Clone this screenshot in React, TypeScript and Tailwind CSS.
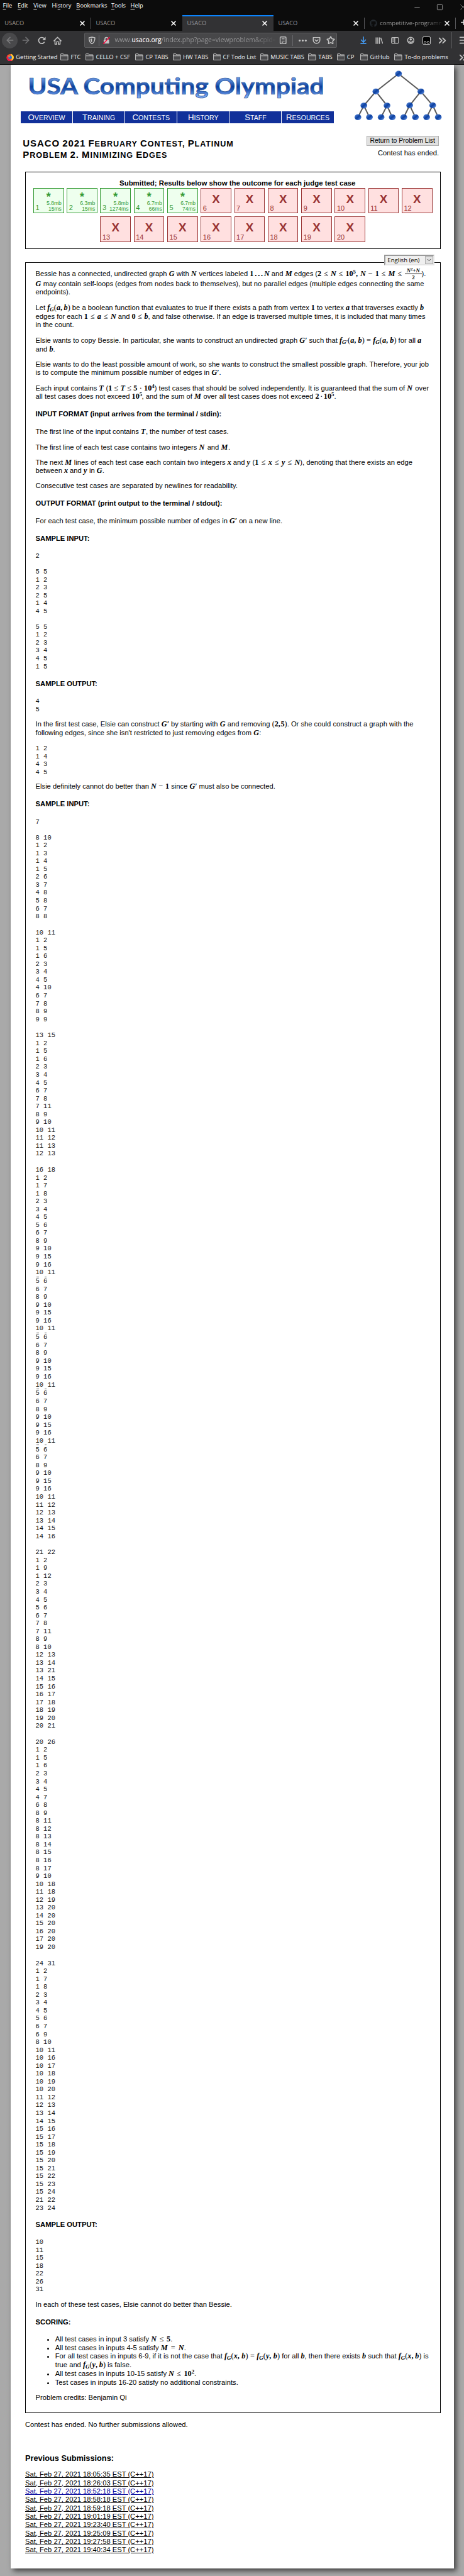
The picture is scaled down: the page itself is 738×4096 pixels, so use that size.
import React from "react";
import {
  ArrowDownToLine,
  ArrowLeft,
  ArrowRight,
  ChevronDown,
  ChevronsRight,
  Menu,
  Minus,
  Plus,
  Square,
  Star,
  X,
} from "lucide-react";
import { FaGithub } from "react-icons/fa";

/* ---------- browser chrome ---------- */

const menus = [
  ["", "F", "ile", "w-[23.5px]"],
  ["", "E", "dit", "w-[25.2px]"],
  ["", "V", "iew", "w-[29.2px]"],
  ["Hi", "s", "tory", "w-[38.9px]"],
  ["", "B", "ookmarks", "w-[55.6px]"],
  ["", "T", "ools", "w-[30.6px]"],
  ["", "H", "elp", "w-[30px]"],
];

function MenuBar() {
  return (
    <div className="flex h-[23.5px] justify-between">
      <div className="flex pl-[4.6px] pt-[2px] text-[9.3px] leading-[13px] text-white">
        {menus.map(([a, b, c, w]) => (
          <div key={b + c} className={`whitespace-nowrap ${w}`}>
            {a}
            <span className="underline underline-offset-[1.5px]">{b}</span>
            {c}
          </div>
        ))}
      </div>
      <div className="flex items-center text-[#9a9a9a]">
        <Minus size={13} strokeWidth={1.6} className="mr-[24px]" />
        <Square size={11} strokeWidth={2} className="mr-[24px]" />
        <X size={15} strokeWidth={1.3} className="-mr-[6px]" />
      </div>
    </div>
  );
}

function Tab({ active, line }: { active?: boolean; line?: boolean }) {
  return (
    <div
      className={
        active
          ? "flex w-[145px] shrink-0 items-center border-t-2 border-[#0a84ff] bg-[#323234]"
          : "flex w-[145.1px] shrink-0 items-center border-t-2 border-transparent"
      }
    >
      <span className="grow pl-[7.3px] text-[9.3px] text-[#9b9b9b]">USACO</span>
      <X size={12} strokeWidth={3.2} className="mr-[7px] text-white" />
      <span className={line ? "h-[18.5px] w-px bg-[#56565a]" : "w-px"} />
    </div>
  );
}

function TabStrip() {
  return (
    <div className="flex h-[25px] overflow-hidden">
      <Tab line />
      <Tab />
      <Tab active />
      <Tab line />
      <div className="flex w-[145px] shrink-0 items-center pt-[2px]">
        <FaGithub size={12} className="ml-[7.5px] shrink-0 text-[#24292e]" />
        <span className="ml-[4.5px] w-[98px] overflow-hidden whitespace-nowrap bg-gradient-to-r from-[#9b9b9b] from-75% to-[#2a2a2a] bg-clip-text text-[9.5px] text-transparent">
          competitive-programm
        </span>
        <X size={12} strokeWidth={3.2} className="ml-[3.5px] mr-[7px] shrink-0 text-white" />
        <span className="h-[18.5px] w-px shrink-0 bg-[#56565a]" />
      </div>
      <Plus size={13} strokeWidth={2.6} className="ml-[6px] mt-[5px] shrink-0 text-[#e0e0e0]" />
    </div>
  );
}

function Toolbar() {
  return (
    <div className="flex h-[31px] items-center overflow-hidden text-[#c4c4c4]">
      <span className="ml-[3.2px] flex h-[25px] w-[25px] shrink-0 items-center justify-center rounded-full bg-[#49494b] text-[#7c7c7e]">
        <ArrowLeft size={16} strokeWidth={2.4} />
      </span>
      <ArrowRight size={16} strokeWidth={2.4} className="ml-[5.3px] shrink-0 text-[#737375]" />
      <svg viewBox="0 0 16 16" className="ml-[11px] h-[13px] w-[13px] shrink-0" fill="none" stroke="currentColor" strokeWidth="2">
        <path d="M13.2 10.6A6 6 0 1 1 12.6 4.2" />
        <path d="M15.4 0.5V7H9z" fill="currentColor" stroke="none" />
      </svg>
      <svg viewBox="0 0 16 16" className="ml-[11.5px] h-[13px] w-[13px] shrink-0" fill="none" stroke="currentColor" strokeWidth="1.8">
        <path d="M1 8.5 8 1.5l7 7M3 7v8h3.5v-5h3v5H13V7" strokeLinecap="round" strokeLinejoin="round" />
      </svg>
      <div className="ml-[36px] flex h-[24px] w-[402px] shrink-0 items-center overflow-hidden rounded-[2px] border border-[#5c5c5e] bg-[#474749]">
        <svg viewBox="0 0 16 16" className="ml-[5px] h-[12.5px] w-[12.5px] shrink-0" fill="none" stroke="currentColor" strokeWidth="1.8">
          <path d="M8 1.2 14 2.4c0 6-1 9.8-6 12.6C3 12.2 2 8.400 2 2.400z" strokeLinejoin="round" />
          <path d="M8 4.200v8c-2-1.600-2.900-4-3-7.400z" fill="currentColor" stroke="none" />
        </svg>
        <span className="ml-[4.5px] h-[17px] w-px shrink-0 bg-[#6a6a72]" />
        <svg viewBox="0 0 16 16" className="ml-[5px] h-[12.5px] w-[12.5px] shrink-0">
          <rect x="2.5" y="7" width="11" height="7.5" rx="1" fill="#c4c4c4" />
          <path d="M5 8V5a3 3 0 0 1 6 0v3" fill="none" stroke="#c4c4c4" strokeWidth="2" />
          <path d="M1.5 15 14.5 1.2" stroke="#ff0039" strokeWidth="1.8" />
        </svg>
        <span className="ml-[7px] w-[255.5px] shrink-0 overflow-hidden whitespace-nowrap bg-gradient-to-r from-[#98989a] from-85% to-[#505052] bg-clip-text text-[10.4px] text-transparent">
          www.<span className="text-white">usaco.org</span>/index.php?page=viewproblem&amp;cpid=
        </span>
        <svg viewBox="0 0 16 16" className="ml-[6px] h-[12.5px] w-[12.5px] shrink-0" fill="none" stroke="currentColor" strokeWidth="1.8">
          <rect x="2" y="1" width="12" height="14" rx="1.5" />
          <path d="M5 4.500h6M5 7h6M5 9.500h6M5 12h3" strokeWidth="1.1" />
        </svg>
        <span className="ml-[9px] h-[17px] w-px shrink-0 bg-[#66666a]" />
        <svg viewBox="0 0 16 16" className="ml-[9px] h-[13px] w-[13px] shrink-0" fill="currentColor">
          <circle cx="2" cy="8" r="1.9" />
          <circle cx="8" cy="8" r="1.9" />
          <circle cx="14" cy="8" r="1.9" />
        </svg>
        <svg viewBox="0 0 16 16" className="ml-[9px] h-[13px] w-[13px] shrink-0" fill="none" stroke="currentColor" strokeWidth="1.8" strokeLinecap="round" strokeLinejoin="round">
          <path d="M1.500 2h13v5a6.500 6.500 0 0 1-13 0z" />
          <path d="M5 6.500 8 9.300l3-2.800" />
        </svg>
        <Star size={14} strokeWidth={2.6} className="ml-[8.5px] shrink-0" />
      </div>
      <ArrowDownToLine size={14} strokeWidth={2.6} className="ml-[35px] shrink-0 text-[#45a1ff]" />
      <svg viewBox="0 0 16 16" className="ml-[12px] h-[12.5px] w-[12.5px] shrink-0" fill="none" stroke="currentColor" strokeWidth="1.8">
        <path d="M1.500 2v13M5 2v13M8.500 2v13M11 2.500 15 14.500" />
      </svg>
      <svg viewBox="0 0 16 16" className="ml-[12.5px] h-[12.5px] w-[12.5px] shrink-0" fill="none" stroke="currentColor" strokeWidth="1.6">
        <rect x="1" y="2" width="14" height="12" rx="1.8" />
        <path d="M7.500 2v12M3 5h2.500M3 7.500h2.500M3 10h2.500" />
      </svg>
      <svg viewBox="0 0 16 16" className="ml-[12.5px] h-[12.5px] w-[12.5px] shrink-0" fill="none" stroke="currentColor" strokeWidth="1.8">
        <circle cx="8" cy="8" r="6.4" />
        <circle cx="8" cy="6" r="2.3" fill="currentColor" stroke="none" />
        <path d="M4 8.500c.5 4.500 7.500 4.500 8 0" />
      </svg>
      <svg viewBox="0 0 16 16" className="ml-[12.5px] h-[13px] w-[13px] shrink-0" fill="#000" stroke="#fff" strokeWidth="1">
        <rect x=".5" y=".5" width="15" height="15" rx="2.5" />
        <circle cx="5" cy="11.5" r="2" />
        <circle cx="11" cy="11.5" r="2" />
      </svg>
      <ChevronsRight size={19} strokeWidth={2.3} className="ml-[9px] shrink-0" />
      <span className="ml-[5px] h-[26px] w-px shrink-0 bg-[#5a5a5c]" />
      <Menu size={16} strokeWidth={2.6} className="ml-[10.5px] shrink-0" />
    </div>
  );
}

const bookmarks = [
  ["FTC", "w-[40px]"],
  ["CELLO + CSF", "w-[79px]"],
  ["CP TABS", "w-[59.6px]"],
  ["HW TABS", "w-[63.5px]"],
  ["CF Todo List", "w-[75.6px]"],
  ["MUSIC TABS", "w-[76.2px]"],
  ["TABS", "w-[45.4px]"],
  ["CP", "w-[36.8px]"],
  ["GitHub", "w-[54.9px]"],
  ["To-do problems", "w-[98.5px]"],
];

function Bookmarks() {
  return (
    <div className="flex h-[23px] items-center overflow-hidden text-[9.4px] text-[#f2f2f2]">
      <svg viewBox="0 0 16 16" className="ml-[9.5px] h-[12.5px] w-[12.5px] shrink-0">
        <circle cx="8" cy="8.5" r="7.3" fill="#ff5a1f" />
        <path d="M3 2.500C0 6 0 11 3 14c3 2 7 2 9 0-5 0-8-3-9-6z" fill="#e8114f" />
        <path d="M9 .5c4 1 7 5 6 9-1 3-3 4-5 5 2-4 1-9-1-14z" fill="#ffd02e" />
        <circle cx="7.8" cy="8" r="3.5" fill="#1f6fd8" />
        <path d="M4 6c2-1 4-.5 4 1-2 0-2 1-2 2z" fill="#ff9a1f" />
      </svg>
      <span className="ml-[3.3px] w-[71.2px] shrink-0 whitespace-nowrap">Getting Started</span>
      {bookmarks.map(([label, w]) => (
        <div key={label} className={`flex shrink-0 items-center gap-[3.4px] whitespace-nowrap ${w}`}>
          <svg viewBox="0 0 16 14" className="h-[11px] w-[12.6px] shrink-0" fill="#4a4a4c" stroke="#c8c8c8" strokeWidth="1.2">
            <path d="M.7 13.200V1.500Q.7.7 1.500.7H6L7.500 2.500h7q.8 0 .8.800v9.900z" />
            <path d="M.7 4.800h14.600" />
          </svg>
          {label}
        </div>
      ))}
      <ChevronsRight size={19} strokeWidth={2.3} className="ml-[1px] shrink-0 text-[#c4c4c4]" />
    </div>
  );
}

/* ---------- site header ---------- */

const levels = [
  [[788.7, 149.3]],
  [[742.7, 185.2], [834, 185.2]],
  [[718.3, 213.8], [765.3, 213.8], [811.3, 213.4], [858, 213.4]],
  [[706.3, 237.4], [729.7, 237.4], [753.3, 237.4], [776, 237.4], [799.3, 237.4], [823, 237.4], [845.7, 237.4], [869.3, 237.4]],
];

function Tree() {
  return (
    <svg viewBox="697 140 180 106" className="ml-[31px] mt-[-8.3px] h-[83.1px] w-[141.1px] shrink-0">
      <defs>
        <linearGradient id="node" x1="0" y1="0" x2="1" y2="1">
          <stop offset="0" stopColor="#5d8fe0" />
          <stop offset=".5" stopColor="#0b3f9f" />
          <stop offset="1" stopColor="#6b9cf0" />
        </linearGradient>
      </defs>
      {levels.slice(1).map((row, d) =>
        row.map(([x, y], i) => {
          const [px, py] = levels[d][i >> 1];
          return <line key={`${d}-${i}`} x1={px} y1={py} x2={x} y2={y} stroke="#5a5a5a" strokeWidth="2.6" />;
        })
      )}
      {levels.flat().map(([x, y]) => (
        <ellipse key={x} cx={x} cy={y} rx="6.8" ry="6" fill="url(#node)" />
      ))}
    </svg>
  );
}

function Logo() {
  return (
    <svg className="h-[59px] w-[490px] overflow-visible" viewBox="0 0 490 59">
      <defs>
        <linearGradient id="logo" gradientUnits="userSpaceOnUse" x1="0" y1="4" x2="0" y2="42">
          <stop offset="0" stopColor="#6f9be6" />
          <stop offset=".18" stopColor="#4f7fd0" />
          <stop offset=".42" stopColor="#0a3f9e" />
          <stop offset=".56" stopColor="#2459b6" />
          <stop offset=".75" stopColor="#6292e4" />
          <stop offset="1" stopColor="#a6c8ff" />
        </linearGradient>
      </defs>
      <text
        x="11.5"
        y="31.8"
        textLength="471"
        lengthAdjust="spacingAndGlyphs"
        fill="url(#logo)"
        stroke="#2b5594"
        strokeWidth=".7"
        className="font-['Lato',sans-serif] text-[36px] font-bold"
      >
        USA Computing Olympiad
      </text>
    </svg>
  );
}

function Nav() {
  return (
    <div className="ml-[16.5px] flex gap-px">
      {["Overview", "Training", "Contests", "History", "Staff", "Resources"].map((n) => (
        <div
          key={n}
          className="h-[19px] w-[82.1px] bg-[#11309a] text-center text-[10.6px] leading-[20px] text-white uppercase first-letter:text-[13.2px]"
        >
          {n}
        </div>
      ))}
    </div>
  );
}

function Title({ words }: { words: string[] }) {
  return (
    <div className="flex h-[17.5px] items-baseline gap-[4.2px] whitespace-nowrap text-[12.6px] leading-[17.5px] font-bold tracking-[.92px] uppercase">
      {words.map((w) =>
        /^[A-Z]{2}|^\d/.test(w) ? (
          <div key={w} className="text-[15px]">{w}</div>
        ) : (
          <div key={w} className="first-letter:text-[15px]">{w}</div>
        )
      )}
    </div>
  );
}

/* ---------- judge results ---------- */

const passed = [
  ["5.8mb", "15ms"],
  ["6.3mb", "15ms"],
  ["5.8mb", "1274ms"],
  ["6.7mb", "66ms"],
  ["6.7mb", "74ms"],
];

function Case({ n }: { n: number }) {
  const stats = passed[n - 1];
  if (stats) {
    return (
      <div className="h-[40.5px] w-[48.6px] border border-[#339933] bg-[#eeffee] text-[#339933]">
        <div className="h-[19px] text-center text-[18.8px] leading-[25px] font-bold">*</div>
        <div className="flex items-end justify-between pr-[2.6px] pl-[2.5px]">
          <span className="text-[11px] leading-[13px]">{n}</span>
          <span className="text-right text-[8.6px] leading-[9.4px]">
            {stats[0]}
            <br />
            {stats[1]}
          </span>
        </div>
      </div>
    );
  }
  return (
    <div className="h-[40.5px] w-[48.6px] border border-[#993333] bg-[#ffe0e0] text-[#993333]">
      <div className="h-[25.5px] text-center text-[18.8px] leading-[34px] font-bold">X</div>
      <div className="pl-[2.5px] text-[11px] leading-[13px]">{n}</div>
    </div>
  );
}

function Results() {
  const cases = Array.from({ length: 20 }, (_, i) => i + 1);
  return (
    <div className="ml-[23.5px] h-[122.5px] w-[660.5px] border border-black pt-[10.5px]">
      <div className="pl-[15px] text-center text-[11.4px] leading-[13px] font-bold">
        Submitted; Results below show the outcome for each judge test case
      </div>
      <div className="mt-px flex justify-center gap-[4.7px]">
        {cases.slice(0, 12).map((n) => <Case key={n} n={n} />)}
      </div>
      <div className="mt-[5px] flex justify-center gap-[4.7px]">
        {cases.slice(12).map((n) => <Case key={n} n={n} />)}
      </div>
    </div>
  );
}

/* ---------- problem statement ---------- */

/** Inline formula: blank-separated tokens are spread over the given width. */
function M({ t, w }: { t: string; w: string }) {
  return (
    <span className={`inline-flex justify-between font-['Liberation_Serif',serif] text-[12.2px] leading-none font-bold ${w}`}>
      {t.split(" ").map((token, i) => (
        <span key={i} className="whitespace-nowrap">
          {(token.match(/\^\w|_G'?|[A-Za-z]|\d+|./g) ?? []).map((p, j) => {
            if (p[0] === "^") return <span key={j} className="relative -top-[4px] text-[8.8px]">{p.slice(1)}</span>;
            if (p[0] === "_") return <i key={j} className="relative top-[2px] text-[9px]">{p.slice(1).replace("'", "′")}</i>;
            if (/[A-Za-z]/.test(p)) return <i key={j}>{p}</i>;
            if (/[≤=−·+()]/.test(p)) return <span key={j} className="font-normal">{p}</span>;
            return <span key={j}>{p.replace("'", "′")}</span>;
          })}
        </span>
      ))}
    </span>
  );
}

function L({ c = "", children }: { c?: string; children: React.ReactNode }) {
  return <div className={`h-[13px] whitespace-nowrap ${c}`}>{children}</div>;
}

function Pre({ c = "", rows }: { c?: string; rows: string }) {
  return (
    <pre className={`font-['Liberation_Mono',monospace] text-[10.45px] leading-[12.54px] text-[#111] ${c}`}>
      {rows.split(",").join("\n")}
    </pre>
  );
}

/** Seam between two stitched captures: the clipped feet of a row show above it. */
function Cut() {
  return (
    <div className="flex h-[1.4px] pl-[1.5px]">
      <span className="h-px w-[4px] bg-[#555]" />
      <span className="ml-[8.5px] h-px w-[3px] bg-[#555]" />
    </div>
  );
}

const cycle = "5 6,6 7,8 9,9 10,9 15,9 16,10 11";

function Statement() {
  return (
    <div className="ml-[23.5px] h-[3419.5px] w-[660.5px] border border-black pt-[11.4px] pl-[15.6px]">
      <L>
        Bessie has a connected, undirected graph <M t="G" w="w-[9px]" /> with <M t="N" w="w-[9.5px]" /> vertices labeled{" "}
        <M t="1 . . . N" w="w-[31.5px]" /> and <M t="M" w="w-[11px]" /> edges (<M t="2 ≤ N ≤ 10^5, N − 1 ≤ M ≤" w="w-[134px]" />
        <span className="relative -top-[6.5px] ml-[5px] inline-flex w-[26.5px] flex-col items-center font-['Liberation_Serif',serif] text-[8.8px] leading-[8.5px] font-bold">
          <span className="w-full border-b border-black text-center leading-[9px]">
            <i>N</i>
            <span className="relative -top-[3px] text-[7px] leading-none">2</span>+<i>N</i>
          </span>
          <span className="mt-px">2</span>
        </span>
        ).
      </L>
      <L c="mt-[2.8px]">
        <M t="G" w="w-[9px]" /> may contain self-loops (edges from nodes back to themselves), but no parallel edges (multiple edges connecting the same
      </L>
      <L c="mt-[.3px]">endpoints).</L>
      <L c="mt-[11.5px]">
        Let <M t="f_G(a, b)" w="w-[36.5px]" /> be a boolean function that evaluates to true if there exists a path from vertex{" "}
        <M t="1" w="w-[6px]" /> to vertex <M t="a" w="w-[6px]" /> that traverses exactly <M t="b" w="w-[6px]" />
      </L>
      <L c="mt-[1px]">
        edges for each <M t="1 ≤ a ≤ N" w="w-[51px]" /> and <M t="0 ≤ b" w="w-[26px]" />, and false otherwise. If an edge is traversed multiple times, it is included that many times
      </L>
      <L c="mt-[.3px]">in the count.</L>
      <L c="mt-[11.5px]">
        Elsie wants to copy Bessie. In particular, she wants to construct an undirected graph <M t="G'" w="w-[12px]" /> such that{" "}
        <M t="f_G'(a, b) = f_G(a, b)" w="w-[90.5px]" /> for all <M t="a" w="w-[6px]" />
      </L>
      <L c="mt-[1px]">
        and <M t="b" w="w-[6px]" />.
      </L>
      <L c="mt-[11.1px]">
        Elsie wants to do the least possible amount of work, so she wants to construct the smallest possible graph. Therefore, your job
      </L>
      <L c="mt-[.3px]">
        is to compute the minimum possible number of edges in <M t="G'" w="w-[12px]" />.
      </L>
      <L c="mt-[11.5px]">
        Each input contains <M t="T" w="w-[8px]" /> (<M t="1 ≤ T ≤ 5 · 10^4" w="w-[73.5px]" />) test cases that should be solved independently. It is guaranteed that the sum of{" "}
        <M t="N" w="w-[10px]" /> over
      </L>
      <L c="mt-[.3px]">
        all test cases does not exceed <M t="10^5" w="w-[16px]" />, and the sum of <M t="M" w="w-[11.5px]" /> over all test cases does not exceed{" "}
        <M t="2 · 10^5" w="w-[30px]" />.
      </L>
      <L c="mt-[14.9px] font-bold">INPUT FORMAT (input arrives from the terminal / stdin):</L>
      <L c="mt-[15.2px]">
        The first line of the input contains <M t="T" w="w-[8px]" />, the number of test cases.
      </L>
      <L c="mt-[11.5px]">
        The first line of each test case contains two integers <M t="N" w="w-[10px]" /> and <M t="M" w="w-[11.5px]" />.
      </L>
      <L c="mt-[11.1px]">
        The next <M t="M" w="w-[11.5px]" /> lines of each test case each contain two integers <M t="x" w="w-[6px]" /> and{" "}
        <M t="y" w="w-[6px]" /> (<M t="1 ≤ x ≤ y ≤ N" w="w-[72px]" />), denoting that there exists an edge
      </L>
      <L c="mt-[.3px]">
        between <M t="x" w="w-[6px]" /> and <M t="y" w="w-[6px]" /> in <M t="G" w="w-[9px]" />.
      </L>
      <L c="mt-[11.5px]">Consecutive test cases are separated by newlines for readability.</L>
      <L c="mt-[14.9px] font-bold">OUTPUT FORMAT (print output to the terminal / stdout):</L>
      <L c="mt-[15.1px]">
        For each test case, the minimum possible number of edges in <M t="G'" w="w-[12px]" /> on a new line.
      </L>
      <L c="mt-[14.4px] font-bold">SAMPLE INPUT:</L>
      <Pre c="mt-[15.1px]" rows="2,,5 5,1 2,2 3,2 5,1 4,4 5,,5 5,1 2,2 3,3 4,4 5,1 5" />
      <L c="mt-[15px] font-bold">SAMPLE OUTPUT:</L>
      <Pre c="mt-[15.1px]" rows="4,5" />
      <L c="mt-[10.9px]">
        In the first test case, Elsie can construct <M t="G'" w="w-[12px]" /> by starting with <M t="G" w="w-[9px]" /> and removing{" "}
        <M t="(2, 5)" w="w-[24px]" />. Or she could construct a graph with the
      </L>
      <L c="mt-[1px]">
        following edges, since she isn't restricted to just removing edges from <M t="G" w="w-[9px]" />:
      </L>
      <Pre c="mt-[11.9px]" rows="1 2,1 4,4 3,4 5" />
      <L c="mt-[10.2px]">
        Elsie definitely cannot do better than <M t="N − 1" w="w-[29px]" /> since <M t="G'" w="w-[12px]" /> must also be connected.
      </L>
      <L c="mt-[15px] font-bold">SAMPLE INPUT:</L>
      <Pre c="mt-[15.1px]" rows="7,,8 10,1 2,1 3,1 4,1 5,2 6,3 7,4 8,5 8,6 7,8 8" />
      <Pre c="mt-[13px]" rows="10 11,1 2,1 5,1 6,2 3,3 4,4 5,4 10,6 7,7 8,8 9,9 9" />
      <Pre c="mt-[13px]" rows="13 15,1 2,1 5,1 6,2 3,3 4,4 5,6 7,7 8,7 11,8 9,9 10,10 11,11 12,11 13,12 13" />
      <Pre c="mt-[13px]" rows={"16 18,1 2,1 7,1 8,2 3,3 4,4 5," + cycle} />
      <Cut />
      <Pre rows={cycle} />
      <Cut />
      <Pre rows={cycle} />
      <Cut />
      <Pre rows={cycle} />
      <Cut />
      <Pre rows={cycle + ",11 12,12 13,13 14,14 15,14 16"} />
      <Pre
        c="mt-[13px]"
        rows="21 22,1 2,1 9,1 12,2 3,3 4,4 5,5 6,6 7,7 8,7 11,8 9,8 10,12 13,13 14,13 21,14 15,15 16,16 17,17 18,18 19,19 20,20 21"
      />
      <Pre
        c="mt-[13px]"
        rows="20 26,1 2,1 5,1 6,2 3,3 4,4 5,4 7,6 8,8 9,8 11,8 12,8 13,8 14,8 15,8 16,8 17,9 10,10 18,11 18,12 19,13 20,14 20,15 20,16 20,17 20,19 20"
      />
      <Pre
        c="mt-[13px]"
        rows="24 31,1 2,1 7,1 8,2 3,3 4,4 5,5 6,6 7,6 9,8 10,10 11,10 16,10 17,10 18,10 19,10 20,11 12,12 13,13 14,14 15,15 16,15 17,15 18,15 19,15 20,15 21,15 22,15 23,15 24,21 22,23 24"
      />
      <L c="mt-[14.2px] font-bold">SAMPLE OUTPUT:</L>
      <Pre c="mt-[14.7px]" rows="10,11,15,18,22,26,31" />
      <L c="mt-[11.2px]">In each of these test cases, Elsie cannot do better than Bessie.</L>
      <L c="mt-[14.6px] font-bold">SCORING:</L>
      <ul className="mt-[14.9px] list-disc pl-[31.2px]">
        <li className="h-[13px] whitespace-nowrap">
          All test cases in input 3 satisfy <M t="N ≤ 5" w="w-[31px]" />.
        </li>
        <li className="mt-[.4px] h-[13px] whitespace-nowrap">
          All test cases in inputs 4-5 satisfy <M t="M = N" w="w-[37px]" />.
        </li>
        <li className="mt-[.3px] whitespace-nowrap">
          <L>
            For all test cases in inputs 6-9, if it is not the case that <M t="f_G(x, b) = f_G(y, b)" w="w-[88px]" /> for all{" "}
            <M t="b" w="w-[6px]" />, then there exists <M t="b" w="w-[6px]" /> such that <M t="f_G(x, b)" w="w-[36.7px]" /> is
          </L>
          <L c="mt-[1.3px]">
            true and <M t="f_G(y, b)" w="w-[36px]" /> is false.
          </L>
        </li>
        <li className="mt-[.8px] h-[13px] whitespace-nowrap">
          All test cases in inputs 10-15 satisfy <M t="N ≤ 10^2" w="w-[41px]" />.
        </li>
        <li className="mt-[.3px] h-[13px] whitespace-nowrap">Test cases in inputs 16-20 satisfy no additional constraints.</li>
      </ul>
      <L c="mt-[11.1px]">Problem credits: Benjamin Qi</L>
    </div>
  );
}

const submissions = ["18:05:35", "18:26:03", "18:52:18", "18:58:18", "18:59:18", "19:01:19", "19:23:40", "19:25:09", "19:27:58", "19:40:34"];

export default function App() {
  return (
    <div className="h-[4096px] w-[738px] overflow-hidden bg-[#a9a9a9]">
      <header className="h-[103px] border-b border-[#0c0c0c] bg-[#0c0c0c] font-['Open_Sans','Noto_Sans',sans-serif]">
        <MenuBar />
        <TabStrip />
        <div className="h-[53.5px] bg-[#323234]">
          <Toolbar />
          <Bookmarks />
        </div>
      </header>

      <main className="ml-[16.5px] h-[3981px] w-[705.5px] bg-white pt-[15px] font-['Liberation_Sans',Arial,sans-serif] text-[11.2px] leading-[13px] text-black shadow-[4px_4px_8px_#444]">
        <div className="flex h-[78px]">
          <div className="w-[514.5px] shrink-0">
            <div className="pl-[16.5px]">
              <Logo />
            </div>
            <Nav />
          </div>
          <Tree />
        </div>

        <div className="mt-[20px] flex h-[57px] justify-between pr-[24px] pl-[19.8px]">
          <div className="pt-[3.4px]">
            <Title words={["USACO", "2021", "February", "Contest,", "Platinum"]} />
            <Title words={["Problem", "2.", "Minimizing", "Edges"]} />
          </div>
          <div className="flex flex-col items-end">
            <button className="h-[15.7px] w-[115.5px] border border-[#adadad] bg-[#e1e1e1] text-[10.4px] leading-[14px] whitespace-nowrap">
              Return to Problem List
            </button>
            <div className="mt-[5.7px]">Contest has ended.</div>
          </div>
        </div>

        <Results />

        <div className="relative z-10 mt-[9.7px] ml-[594.8px] flex h-[17px] w-[79.5px] items-center border-2 border-t-[#999] border-r-[#e5e5e5] border-b-[#e5e5e5] border-l-[#999] bg-[#efefef]">
          <span className="grow pl-[3px] font-['Open_Sans',sans-serif] text-[9.6px] whitespace-nowrap">English (en)</span>
          <span className="flex h-[13px] w-[13px] items-center justify-center border border-[#adadad] bg-[#e1e1e1]">
            <ChevronDown size={9} strokeWidth={2} />
          </span>
        </div>
        <div className="-mt-[5.2px]">
          <Statement />
        </div>

        <div className="mt-[12.2px] ml-[23.5px]">
          <div>Contest has ended. No further submissions allowed.</div>
          <div className="mt-[40px] text-[12.75px] leading-[14px] font-bold">Previous Submissions:</div>
          <div className="mt-[12.7px]">
            {submissions.map((s) => (
              <div key={s} className={`h-[13.33px] underline ${s === "18:52:18" ? "text-[#00009b]" : ""}`}>
                Sat, Feb 27, 2021 {s} EST (C++17)
              </div>
            ))}
          </div>
        </div>
      </main>
    </div>
  );
}
